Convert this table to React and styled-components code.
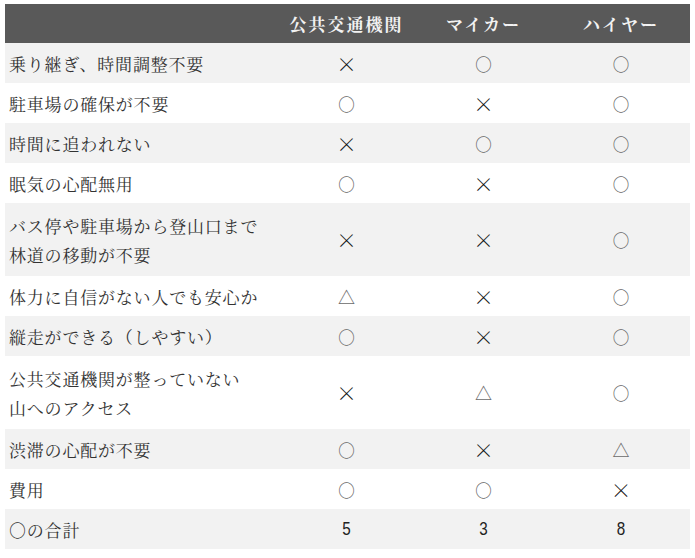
import React from 'react'
import styled, { createGlobalStyle } from 'styled-components'

const GlobalStyle = createGlobalStyle`
  body {
    margin: 0;
    background: #ffffff;
    font-family: 'Noto Serif CJK JP', 'Noto Sans CJK JP', sans-serif;
  }
`

const Page = styled.div`
  padding: 4px 5px;
`

const Table = styled.div`
  width: 685px;
  display: flex;
  flex-direction: column;
`

const HeadRow = styled.div`
  display: grid;
  grid-template-columns: 273px 137px 137px 138px;
  height: 39px;
  align-items: center;
  background: #595959;
`

const HeadCell = styled.div`
  text-align: center;
  color: #f2f2f2;
  font-weight: 700;
  font-size: 17px;
  letter-spacing: 2px;
`

const Row = styled.div`
  display: grid;
  grid-template-columns: 273px 137px 137px 138px;
  min-height: ${(props) => (props.tall ? '73px' : '40px')};
  align-items: center;
  background: ${(props) => (props.shade ? '#f2f2f2' : '#ffffff')};
`

const Label = styled.div`
  padding: 0 4px;
  color: #333333;
  font-size: 17px;
  line-height: 29px;
  letter-spacing: 0.8px;
`

const Mark = styled.div`
  text-align: center;
  font-size: ${(props) => (props.kind === 'x' ? '21px' : '17px')};
  line-height: 29px;
  color: ${(props) => (props.kind === 'x' ? '#111111' : '#6a6a6a')};
  font-weight: ${(props) => (props.kind === 'x' ? 500 : 300)};
`

const Count = styled.div`
  text-align: center;
  font-family: 'Liberation Sans', sans-serif;
  font-size: 19px;
  color: #222222;
  transform: scaleX(0.8);
`

const glyph = { o: '○', x: '×', t: '△' }

const rows = [
  { label: ['乗り継ぎ、時間調整不要'], marks: ['x', 'o', 'o'] },
  { label: ['駐車場の確保が不要'], marks: ['o', 'x', 'o'] },
  { label: ['時間に追われない'], marks: ['x', 'o', 'o'] },
  { label: ['眠気の心配無用'], marks: ['o', 'x', 'o'] },
  { label: ['バス停や駐車場から登山口まで', '林道の移動が不要'], marks: ['x', 'x', 'o'] },
  { label: ['体力に自信がない人でも安心か'], marks: ['t', 'x', 'o'] },
  { label: ['縦走ができる（しやすい）'], marks: ['o', 'x', 'o'] },
  { label: ['公共交通機関が整っていない', '山へのアクセス'], marks: ['x', 't', 'o'] },
  { label: ['渋滞の心配が不要'], marks: ['o', 'x', 't'] },
  { label: ['費用'], marks: ['o', 'o', 'x'] },
]

const App = () => {
  return (
    <Page>
      <GlobalStyle />
      <Table>
        <HeadRow>
          <div />
          <HeadCell>公共交通機関</HeadCell>
          <HeadCell>マイカー</HeadCell>
          <HeadCell>ハイヤー</HeadCell>
        </HeadRow>
        {rows.map((row, i) => (
          <Row key={i} shade={i % 2 === 0} tall={row.label.length > 1}>
            <Label>
              {row.label.map((line, j) => (
                <div key={j}>{line}</div>
              ))}
            </Label>
            {row.marks.map((m, j) => (
              <Mark key={j} kind={m}>{glyph[m]}</Mark>
            ))}
          </Row>
        ))}
        <Row shade>
          <Label>○の合計</Label>
          <Count>5</Count>
          <Count>3</Count>
          <Count>8</Count>
        </Row>
      </Table>
    </Page>
  )
}

export default App
